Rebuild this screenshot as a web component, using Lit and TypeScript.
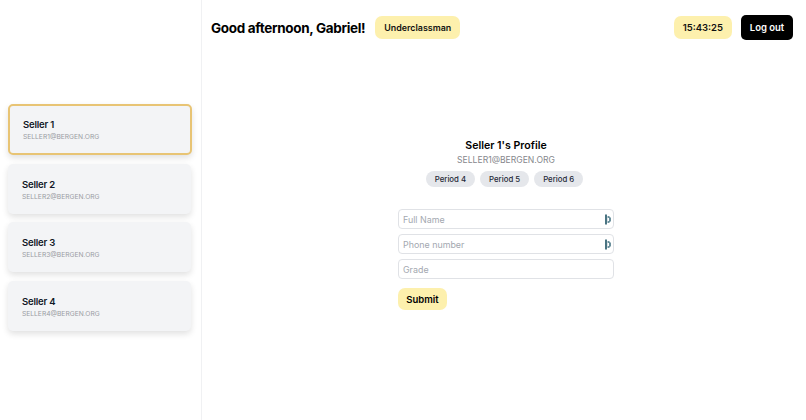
import { LitElement, css, html } from "lit";
import { customElement } from "lit/decorators.js";

const sellers = [1, 2, 3, 4];
const periods = ["Period 4", "Period 5", "Period 6"];

const fillIcon = html`<svg class="fill-icon" width="6" height="11" viewBox="0 0 6 11">
  <rect x="0" y="0.5" width="2" height="10" fill="#4a7482"></rect>
  <path d="M2.5 2 L4 2 L6 4 L6 7 L4 9 L2.5 9 Z" fill="#6b909c"></path>
  <rect x="2.5" y="4" width="1.5" height="3" fill="#fff"></rect>
</svg>`;

@customElement("app-root")
export class AppRoot extends LitElement {
  static styles = css`
    :host {
      display: flex;
      width: 806px;
      height: 420px;
      background: #fff;
      color: #000;
      font-family: Inter, "Liberation Sans", sans-serif;
      overflow: hidden;
    }
    .sidebar {
      box-sizing: border-box;
      width: 202px;
      height: 420px;
      flex: none;
      border-right: 1px solid #f0f1f3;
      padding: 104px 10px 0 8px;
      display: flex;
      flex-direction: column;
      gap: 8.7px;
    }
    .card {
      box-sizing: border-box;
      height: 50px;
      padding: 14px 14px 0;
      background: #f3f4f6;
      border-radius: 5px;
      box-shadow: 0 3px 6px rgba(0, 0, 0, 0.12);
    }
    .card.active {
      height: 51px;
      margin-right: -1px;
      padding: 12px 13px 0;
      border: 2px solid #e8c474;
    }
    .name {
      font-size: 9.5px;
      line-height: 13px;
      font-weight: 600;
      letter-spacing: -0.2px;
      color: #111827;
    }
    .mail {
      font-size: 6.7px;
      line-height: 10px;
      margin-top: 1px;
      color: #9a9ca3;
    }
    main {
      flex: 1;
      display: flex;
      flex-direction: column;
      min-width: 0;
    }
    header {
      display: flex;
      align-items: center;
      height: 55px;
      padding: 0 13px 0 9px;
    }
    h1 {
      margin: 0;
      font-size: 13.5px;
      font-weight: 700;
      letter-spacing: -0.33px;
    }
    .pill {
      background: #fdf0ad;
      border-radius: 7px;
      font-size: 9.5px;
      font-weight: 600;
      line-height: 23px;
      padding: 0 9px;
      color: #111;
    }
    .rank {
      margin-left: 10px;
      font-size: 8.9px;
    }
    .clock {
      margin-left: auto;
    }
    .logout {
      margin-left: 9px;
      background: #000;
      color: #fff;
      border: 0;
      border-radius: 5px;
      height: 25px;
      width: 52px;
      padding: 0;
      font: 600 9.5px Inter, "Liberation Sans", sans-serif;
    }
    .profile {
      align-self: center;
      width: 216px;
      margin-top: 84px;
      margin-left: 4px;
      display: flex;
      flex-direction: column;
    }
    .head {
      text-align: center;
    }
    h2 {
      margin: 0;
      font-size: 10.6px;
      line-height: 14px;
      font-weight: 600;
    }
    .sub {
      font-size: 8.6px;
      line-height: 12px;
      margin-top: 1px;
      color: #85878c;
    }
    .periods {
      display: flex;
      justify-content: center;
      gap: 5px;
      margin-top: 5px;
      padding-right: 3px;
    }
    .period {
      background: #e5e7eb;
      border-radius: 8px;
      font-size: 7.8px;
      font-weight: 500;
      line-height: 16px;
      padding: 0 9px;
      color: #1f2937;
    }
    form {
      display: flex;
      flex-direction: column;
      gap: 5px;
      margin-top: 22px;
    }
    .field {
      box-sizing: border-box;
      height: 20px;
      border: 1px solid #e0e2e6;
      border-radius: 4px;
      display: flex;
      align-items: center;
      justify-content: space-between;
      padding: 0 2px 0 4px;
      font-size: 8.9px;
      color: #a3a8b0;
    }
    .submit {
      align-self: flex-start;
      margin-top: 4px;
      width: 49px;
      height: 22px;
      padding: 0;
      border: 0;
      border-radius: 7px;
      background: #fdf0ad;
      color: #000;
      font: 600 9.5px Inter, "Liberation Sans", sans-serif;
    }
  `;

  render() {
    return html`
      <aside class="sidebar">
        ${sellers.map(
          (n) => html`<div class="card ${n === 1 ? "active" : ""}">
            <div class="name">Seller ${n}</div>
            <div class="mail">SELLER${n}@BERGEN.ORG</div>
          </div>`
        )}
      </aside>
      <main>
        <header>
          <h1>Good afternoon, Gabriel!</h1>
          <span class="pill rank">Underclassman</span>
          <span class="pill clock">15:43:25</span>
          <button class="logout">Log out</button>
        </header>
        <section class="profile">
          <div class="head">
            <h2>Seller 1's Profile</h2>
            <div class="sub">SELLER1@BERGEN.ORG</div>
          </div>
          <div class="periods">
            ${periods.map((p) => html`<span class="period">${p}</span>`)}
          </div>
          <form>
            <div class="field">Full Name ${fillIcon}</div>
            <div class="field">Phone number ${fillIcon}</div>
            <div class="field">Grade</div>
            <button class="submit" type="button">Submit</button>
          </form>
        </section>
      </main>
    `;
  }
}
